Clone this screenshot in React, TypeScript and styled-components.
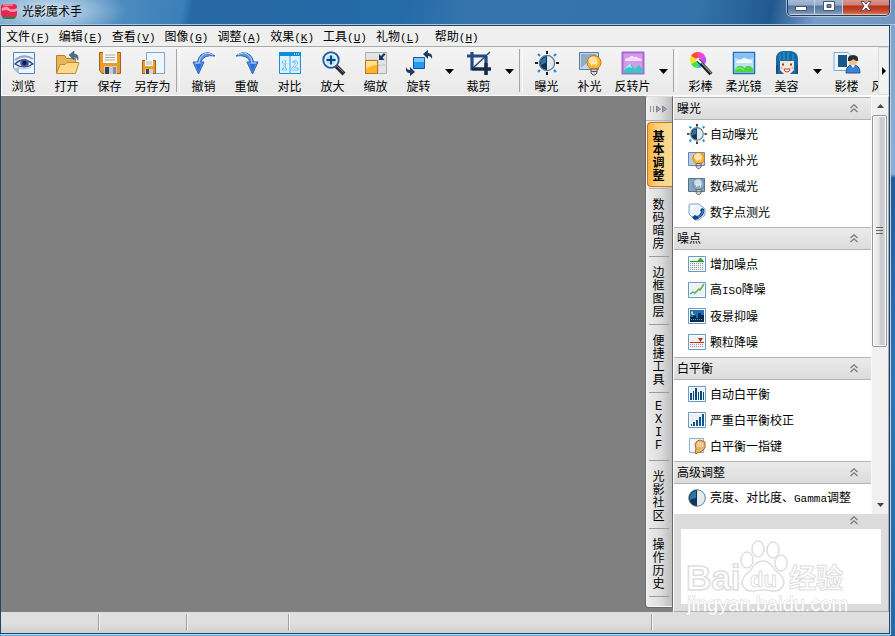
import React from "react";
import styled, { createGlobalStyle, css } from "styled-components";

const GlobalStyle = createGlobalStyle`
  * { box-sizing: border-box; }
  body {
    margin: 0;
    font: 12px/14px "Noto Sans CJK SC", sans-serif;
    color: #000;
    overflow: hidden;
  }
  button { font: inherit; color: inherit; border: 0; padding: 0; background: none; }
  svg { display: block; flex: none; }
`;

const Frame = styled.div`
  height: 100vh;
  display: flex;
  flex-direction: column;
  padding: 0 4px 1px 0;
  background:
    linear-gradient(to bottom, #7ba0cb 0, #8bb0d8 174px, #215b9b 178px, #2f74b8 60%, #2569a9 100%) right / 5px 100% no-repeat,
    #5cb2dc;
`;

const TitleBar = styled.header`
  height: 25px;
  flex: none;
  display: flex;
  align-items: flex-start;
  justify-content: space-between;
  margin-right: -4px;
  padding-right: 5px;
  border-bottom: 1px solid #a9c6de;
  background:
    radial-gradient(ellipse 76px 26px at 50px 11px, rgba(235, 244, 250, 0.85), rgba(235, 244, 250, 0)),
    linear-gradient(100deg, #6c9fc9 0, #528fc1 12%, #3a7fb8 20.5%, #2769a3 21.5%, #246ba8 45%, #3574ad 52%, #3572aa 78%, #20598f 86%, #7a9cc8 91%, #7295bf 100%);
`;

const AppTitle = styled.h1`
  margin: 0;
  padding: 2px 0 0 1px;
  display: flex;
  align-items: center;
  gap: 4px;
  font-size: 12px;
  font-weight: 400;
  line-height: 18px;
`;

const WindowButtons = styled.div`
  display: flex;
  height: 16px;
  width: 103px;
  border: 1px solid #233a55;
  border-top: 0;
  border-radius: 0 0 5px 5px;
  box-shadow: 0 0 0 1px rgba(220, 235, 248, 0.6);
  overflow: hidden;
`;

const WindowButton = styled.button<{ $close?: boolean }>`
  flex: ${(p) => (p.$close ? "47" : "27")} 1 0;
  display: flex;
  justify-content: center;
  border-right: 1px solid #c2d3e5;
  box-shadow: inset 0 -1px 0 rgba(255, 255, 255, 0.5);
  background: ${(p) =>
    p.$close
      ? "linear-gradient(#d9968c 0, #ce8073 5px, #b5301b 6px, #c84a2c 11px, #d98266 100%)"
      : "linear-gradient(#a5bbd5 0, #94adc9 5px, #55779f 6px, #6787ab 11px, #8ba9ca 100%)"};
  &:last-child { border-right: 0; }
`;

const Client = styled.div`
  flex: 1;
  min-height: 0;
  display: flex;
  flex-direction: column;
  border: 1px solid #23455f;
  box-shadow: 1px 1px 0 #b5d8ee;
  margin-bottom: 1px;
  margin-right: 1px;
  background: #f0f0f0;
`;

const MenuBar = styled.nav`
  height: 21px;
  flex: none;
  display: flex;
  align-items: center;
  gap: 9px;
  padding: 2px 0 0 5px;
  border-bottom: 1px solid #acacac;
  background: #efefef;
`;

const MenuItem = styled.button<{ $apart?: boolean }>`
  flex: none;
  line-height: 18px;
  margin-left: ${(p) => (p.$apart ? "6px" : "0")};
`;

const Mono = styled.span`
  font-family: "Liberation Mono", monospace;
  font-size: 11px;
`;

const ToolBar = styled.div`
  height: 49px;
  flex: none;
  display: flex;
  border: 1px solid #fcfcfc;
  border-width: 0 0 1px 1px;
  background: linear-gradient(#f4f4f4, #e9e9e9);
`;

const ToolStrip = styled.div`
  flex: 1;
  min-width: 0;
  display: flex;
  overflow: hidden;
`;

const ToolButton = styled.button`
  width: 43px;
  flex: none;
  display: flex;
  flex-direction: column;
  align-items: center;
  gap: 4px;
  padding-top: 4px;
  white-space: nowrap;
`;

const DropButton = styled.button`
  width: 17px;
  flex: none;
  display: flex;
  justify-content: flex-end;
  align-items: center;
  padding-right: 3px;
`;

const ToolDivider = styled.div`
  width: 8px;
  flex: none;
  display: flex;
  justify-content: center;
  padding: 2px 0 3px;
  &::before {
    content: "";
    width: 2px;
    border-left: 1px solid #a6a6a6;
    border-right: 1px solid #fafafa;
  }
`;

const MoreButton = styled.button`
  width: 11px;
  flex: none;
  display: flex;
  justify-content: center;
  align-items: center;
  border: 1px solid #dadada;
  background: #f2f2f2;
`;

const Main = styled.main`
  flex: 1;
  min-height: 0;
  display: flex;
`;

const Canvas = styled.section`
  flex: 1;
  background: #808080;
`;

const TabColumn = styled.div`
  width: 29px;
  flex: none;
  padding-bottom: 4px;
  display: flex;
  flex-direction: column;
  background: #808080;
  border-right: 1px solid #fff;
`;

const Tabs = styled.div`
  flex: 1;
  min-height: 0;
  border: 1px solid #686868;
  border-top-color: #ddd;
  border-radius: 2px 0 0 4px;
  box-shadow: inset 1px -1px 0 #f6f6f6;
  background: linear-gradient(to right, #eeeeee, #dddddd 55%, #bdbdbd);
  overflow: hidden;
`;

const CollapseButton = styled.button`
  width: 100%;
  height: 24px;
  display: flex;
  align-items: center;
  justify-content: center;
  border-bottom: 1px solid #b5b5b5;
`;

const Tab = styled.button<{ $active?: boolean }>`
  display: flex;
  width: 100%;
  height: 68px;
  padding: 1px 3px 2px 2px;
  justify-content: center;
  position: relative;
  &::after {
    content: "";
    position: absolute;
    left: 3px;
    right: 3px;
    bottom: 0;
    border-bottom: 1px solid #9c9c9c;
  }
  ${(p) =>
    p.$active &&
    css`
      padding: 1px 0 2px 1px;
      font-weight: 700;
      &::after { border-color: #b5b5b5; }
    `}
`;

const TabLabel = styled.span<{ $active?: boolean; $latin?: boolean }>`
  flex: 1;
  display: flex;
  align-items: center;
  justify-content: center;
  line-height: 13px;
  ${(p) => p.$latin && css`font-family: "Liberation Mono", monospace;`}
  ${(p) =>
    p.$active &&
    css`
      padding-right: 3px;
      border: 1px solid #c6781c;
      border-right: 0;
      border-radius: 4px 0 0 4px;
      background: linear-gradient(to right, #fbb040, #fcd27c 40%, #f8dc96);
    `}
  & > span { width: 12px; word-break: break-all; text-align: center; }
`;

const SidePanel = styled.aside`
  width: 215px;
  flex: none;
  display: flex;
  flex-direction: column;
  background: #dcdcdc;
  border-top: 1px solid #fafafa;
  border-bottom: 1px solid #a9a9a9;
  border-right: 1px solid #aaa;
`;

const ListArea = styled.div`
  flex: 1;
  min-height: 0;
  display: flex;
`;

const SectionList = styled.div`
  flex: 1;
  overflow: hidden;
  background: #fff;
`;

const SectionHeader = styled.button`
  width: 100%;
  height: 23px;
  display: flex;
  align-items: center;
  justify-content: space-between;
  padding: 0 13px 1px 3px;
  border: 1px solid #b4b4b4;
  border-width: 1px 0;
  background: linear-gradient(#ebebeb, #dcdcdc);
`;

const Items = styled.ul`
  margin: 0;
  padding: 1px 0 2px 14px;
  list-style: none;
`;

const Item = styled.button`
  height: 26px;
  display: flex;
  align-items: center;
  gap: 4px;
  white-space: nowrap;
`;

const ScrollBar = styled.div`
  width: 17px;
  flex: none;
  display: flex;
  flex-direction: column;
  background: #f0f0f0;
  border-left: 1px solid #fafafa;
`;

const ScrollArrow = styled.button`
  height: 18px;
  flex: none;
  display: flex;
  align-items: center;
  justify-content: center;
`;

const ScrollTrack = styled.div`
  flex: 1;
  min-height: 0;
`;

const ScrollThumb = styled.div`
  height: 61%;
  width: 15px;
  display: flex;
  align-items: center;
  justify-content: center;
  border: 1px solid #979797;
  border-radius: 2px;
  box-shadow: inset 0 0 0 1px #fbfbfb;
  background: linear-gradient(to right, #f4f4f4, #e4e4e8 45%, #c4c6cb 60%, #d8d9dc);
`;

const PreviewArea = styled.div`
  flex: none;
  padding: 0 7px 7px;
  position: relative;
`;

const PreviewToggle = styled.button`
  display: flex;
  width: 100%;
  height: 15px;
  justify-content: flex-end;
  padding: 2px 23px 0 0;
`;

const Preview = styled.div`
  height: 75px;
  background: #fff;
`;

const Watermark = styled.div`
  position: absolute;
  left: 10px;
  top: 22px;
  z-index: 1;
  pointer-events: none;
`;

const StatusBar = styled.footer`
  height: 21px;
  flex: none;
  display: flex;
  padding: 2px 0;
  background: linear-gradient(#dfdfdf 50%, #d0d0d0);
`;

const StatusCell = styled.div<{ $width?: number }>`
  ${(p) =>
    p.$width
      ? css`
          width: ${p.$width}px;
          flex: none;
        `
      : css`
          flex: 1;
        `}
  border-right: 1px solid #a0a0a0;
  box-shadow: 1px 0 0 #f4f4f4;
`;

const StatusEnd = styled.div`
  width: 237px;
  flex: none;
`;

type IconName = string;

const Bulb = ({ color, x = 0, y = 0 }: { color: string; x?: number; y?: number }) => (
  <g transform={`translate(${x} ${y})`}>
    <circle cx="8" cy="7.5" r="7" fill={color} stroke={color === "#ffb52e" ? "#c87813" : "#597895"} />
    <ellipse cx="7" cy="5.5" rx="4.5" ry="4" fill="#fff" opacity=".6" />
    <path d="M6 11l-1-4 3 2 3-2-1 4" fill="none" stroke="#fff3c4" />
    <path d="M5 14h6v4l-2 2H7l-2-2z" fill="#d8d8d8" stroke="#555" />
    <path d="M5 16.5h6" stroke="#555" />
  </g>
);

const Sun = () => (
  <>
    <path d="M12 0v3M12 21v3M0 12h3M21 12h3" stroke="#111b2c" strokeWidth="2" />
    <path d="M3 3l2 2M19 19l2 2M21 3l-2 2M5 19l-2 2" stroke="#1793e8" strokeWidth="2.4" />
    <circle cx="12" cy="12" r="7.6" fill="#e4e9ed" stroke="#64798a" strokeWidth="1.3" />
    <path d="M12 5a7 7 0 0 0 0 14z" fill="#0b3357" />
    <path d="M11 6a6 6 0 0 0-4.700 8Q9 12 11 12z" fill="#2a77a8" />
  </>
);

const Undo = () => (
  <>
    <path d="M23 5Q16-1 9 4Q6 7 5.500 11H1l5.500 12L12 11H8.800Q10 7 14 5.500Q18 4 23 5z" fill="#5b95e8" stroke="#2b61b4" strokeLinejoin="round" />
    <path d="M21 4Q15 0 10 4.500Q7 7.500 7 12H3" fill="none" stroke="#b3d4fb" />
    <path d="M3.500 13h6l-3 8z" fill="#2d6fd4" />
  </>
);

const toolbarIcons: Record<IconName, React.ReactNode> = {
  browse: (
    <>
      <path d="M1.500 1.500h21v21H7l-5.500-5.500z" fill="#eef5fc" stroke="#4a86c4" />
      <path d="M1.500 17H7v5.500z" fill="#9fc4e6" />
      <path d="M3 9Q12 2 21 8" fill="none" stroke="#97a4bd" strokeWidth="2" />
      <path d="M3 13Q11 5 21 13Q12 19 3 13z" fill="#dfe8f6" stroke="#35466e" strokeWidth="1.200" />
      <circle cx="12.500" cy="12" r="4.300" fill="#3e5cab" />
      <circle cx="12.500" cy="12" r="2.200" fill="#101c48" />
      <path d="M5 16Q12 20 19 16" fill="none" stroke="#b9c5dd" />
    </>
  ),
  open: (
    <>
      <path d="M1.500 22V4.500h8l2 3h9V14" fill="#e6b45b" stroke="#b67b2b" />
      <path d="M1.500 22.500L5 13.500h5l2-2h12l-3.500 11z" fill="#ffd98b" stroke="#c28a37" />
      <path d="M14 4l5-4v3q5 0 4 6q-1-3-4-3v3z" fill="#4d6d8d" stroke="#34506c" strokeWidth=".5" />
    </>
  ),
  save: (
    <>
      <path d="M1.500 1.500h21v21H4l-2.500-3z" fill="#e99c27" stroke="#9d621e" />
      <path d="M5 1h14v11H5z" fill="#f8f8f4" />
      <path d="M7 4h10M7 6.500h10M7 9h10" stroke="#aaa" />
      <path d="M6 15h13v8H6z" fill="#c9cbd0" />
      <path d="M7 16h4v7H7z" fill="#384150" />
      <path d="M15 16h3v7h-3z" fill="#8b909b" />
    </>
  ),
  saveAs: (
    <>
      <path d="M5.500 1.500h18v21h-18z" fill="#edf5fd" stroke="#7ea6cf" />
      <path d="M1.500 9.500h13v13h-13z" fill="#e99c27" stroke="#9d621e" />
      <path d="M4 9h8v6H4z" fill="#fff" />
      <path d="M5 11h6M5 13h6" stroke="#aaa" />
      <path d="M4 18h8v5H4z" fill="#d0d2d6" />
      <path d="M5 18h3v5H5z" fill="#3e4650" />
    </>
  ),
  undo: <Undo />,
  redo: <g transform="translate(24 0) scale(-1 1)"><Undo /></g>,
  compare: (
    <>
      <path d="M1.500 1.500h21v21h-21z" fill="#d9f0fd" stroke="#198fdb" />
      <path d="M1 1h22v4H1z" fill="#138bdb" />
      <path d="M16 3h1M18 3h1M20 3h1" stroke="#fff" />
      <path d="M12 5v18" stroke="#3ea6e5" />
      <path d="M4.500 10.500l2-1h1v8h1v1.500h-4v-1.500h1.500v-5.500h-1.500zM14.500 11q3-3 5 0q1 2-3.500 6h4v2h-6v-2q4-4 3.500-6q-1-1-2 .5z" fill="#fff" stroke="#55afe5" strokeWidth=".8" />
    </>
  ),
  zoomIn: (
    <>
      <path d="M15 15l8 8" stroke="#2a2a2a" strokeWidth="4" />
      <path d="M16 15l6.500 6.500" stroke="#929292" />
      <circle cx="10" cy="9" r="7.700" fill="#ace0ff" stroke="#315f9e" strokeWidth="2" />
      <circle cx="10" cy="9" r="5.800" fill="none" stroke="#e4f7ff" strokeWidth="1.500" />
      <path d="M10 4.500v9M5.500 9h9" stroke="#17407c" strokeWidth="2" />
    </>
  ),
  scale: (
    <>
      <path d="M1.500 1.500h21v21h-21z" fill="#e2e3e5" stroke="#aaaeb3" />
      <path d="M1 9h13M14 9v14M14 14h9" stroke="#c5c6c8" />
      <path d="M1.500 9.500h12v13h-12z" fill="#ffb52a" stroke="#be741b" />
      <path d="M2 10h11v4Q7 14 2 18z" fill="#ffe38e" />
      <path d="M15 9V3l2 2 3-3 1.500 1.500-3 3L20.500 9z" fill="#17365c" />
    </>
  ),
  rotate: (
    <>
      <path d="M6.500 6.500h11v11h-11z" fill="#229cf0" stroke="#1555a5" />
      <path d="M7 7h10v4H7z" fill="#75c6ff" />
      <path d="M16 3l5-4v3q5 0 4 6q-1-3-4-3v3zM8 21l-5 4v-3q-5 0-4-6q1 3 4 3v-3z" fill="#1b3b62" />
    </>
  ),
  crop: (
    <>
      <path d="M0 5h19M5 1v17h19M19 5v19" fill="none" stroke="#204c83" strokeWidth="3.200" />
      <path d="M6 17L23 1" stroke="#24456f" strokeWidth="1.300" />
      <path d="M5 18h19M19 12v12" stroke="#162b46" strokeWidth="3.200" />
    </>
  ),
  exposure: <Sun />,
  fill: (
    <>
      <path d="M1.500 1.500h19v17h-19z" fill="#c6d8e8" stroke="#527da6" />
      <path d="M3 3h16L3 17z" fill="#8eacc9" />
      <Bulb color="#ffb52e" x={8} y={4} />
    </>
  ),
  reversal: (
    <>
      <path d="M1.500 1.500h21v21h-21z" fill="#d69aed" stroke="#a56bd1" strokeWidth="2" />
      <path d="M4 9q1-3 4-2q2-4 5-1q3-1 4 1q4 0 4 3H4z" fill="#f2ddfa" />
      <path d="M2 21l7-9 5 6 4-4 4 5v3H2z" fill="#35c8c4" />
      <path d="M9 12l2 5-3-1-4 2z" fill="#a8f0e9" />
    </>
  ),
  wand: (
    <>
      <path d="M9 9V1a8 8 0 0 1 7 4z" fill="#ff40cf" />
      <path d="M9 9l7-4a8 8 0 0 1 0 8z" fill="#b850ff" />
      <path d="M9 9l7 4a8 8 0 0 1-7 4z" fill="#39b5ff" />
      <path d="M9 9v8a8 8 0 0 1-7-4z" fill="#43e54e" />
      <path d="M9 9l-7 4a8 8 0 0 1 0-8z" fill="#f5e528" />
      <path d="M9 9L2 5a8 8 0 0 1 7-4z" fill="#ff4b3d" />
      <circle cx="9" cy="9" r="2" fill="#fff" />
      <path d="M9 9l13 14" stroke="#1d1d20" strokeWidth="4" />
      <path d="M10 9l12 13" stroke="#8f9096" strokeWidth="1.200" />
      <path d="M8 8l4 4" stroke="#eee" strokeWidth="2" />
    </>
  ),
  soft: (
    <>
      <path d="M1.500 1.500h21v21h-21z" fill="#bfe2fb" stroke="#1673c8" strokeWidth="1.500" />
      <path d="M3 3h18v4Q12 10 3 7z" fill="#86bff2" />
      <path d="M4 12q1-4 5-3q3-4 6-1q5 0 5 4z" fill="#f3faff" />
      <path d="M2.500 18q6-6 10-1q4-5 9 1v3.500h-19z" fill="#4ed343" />
      <path d="M3 19q5-4 9 0" fill="none" stroke="#a5ee86" />
    </>
  ),
  beauty: (
    <>
      <path d="M1 23V8q0-8 8-8h7q7 1 7 8v15z" fill="#146ba9" />
      <path d="M5 10h14v9l-4 4H9l-4-4z" fill="#ffe6d5" />
      <path d="M5 3v7M9 1v8M13 1v8M18 3v7" stroke="#3f96cd" />
      <path d="M8 12.500v2M16 12.500v2" stroke="#2a1d1d" strokeWidth="1.500" />
      <path d="M9 18h6q-.5 3-3 3t-3-3" fill="#fff" stroke="#a3443c" />
      <circle cx="6.500" cy="17" r="1.300" fill="#f6b0b5" /><circle cx="17.500" cy="17" r="1.300" fill="#f6b0b5" />
      <path d="M2 14v9M22 14v9" stroke="#1d4e75" strokeWidth="2" />
    </>
  ),
  studio: (
    <>
      <path d="M-1 1.500h14l2 2v16H-1z" fill="#eef6fc" stroke="#7da9d1" />
      <path d="M3 4h9v12H3z" fill="#1d568b" />
      <path d="M11 22q0-8 7-8t7 8z" fill="#3f82d4" stroke="#1e57a1" />
      <circle cx="18" cy="10" r="4.500" fill="#f7c08a" />
      <path d="M13 10q-1-6 5-6t5 6q-3 0-5-2q-1 2-5 2z" fill="#222b36" />
      <path d="M16 14l2 3 2-3" fill="#fff" />
    </>
  ),
  web: <path d="M2 2h20v20H2z" fill="#d4e4f2" stroke="#6d94bb" />,
};

const Tile = ({ children }: { children: React.ReactNode }) => (
  <>
    <path d="M.5 1.500h17v15H.5z" fill="#fff" stroke="#6599c8" />
    <path d="M2 3h14v12H2z" fill="#eef1f3" />
    {children}
  </>
);

const listIcons: Record<IconName, React.ReactNode> = {
  sun: <g transform="translate(-1 -1) scale(.83)"><Sun /></g>,
  bulbOn: (
    <>
      <path d="M.5 1.500h16v13H.5z" fill="#b9cde0" stroke="#6689b0" />
      <g transform="translate(4 1) scale(.83)"><Bulb color="#ffb52e" /></g>
    </>
  ),
  bulbOff: (
    <>
      <path d="M.5 1.500h16v13H.5z" fill="#8aa5c0" stroke="#4e749c" />
      <g transform="translate(4 1) scale(.83)"><Bulb color="#86a9c9" /></g>
    </>
  ),
  meter: (
    <>
      <path d="M2 1h9l6 5v6l-6 5H7L1 11V2z" fill="#eaf3fc" stroke="#7fa3cc" strokeLinejoin="round" />
      <path d="M3 2h7q-6 2-7 7z" fill="#fff" />
      <path d="M16 6q1 4-2 7t-7 4q-2-1-3-3l3-2 2 1q3-1 4-4l-1-2 2-2z" fill="#12488f" />
      <path d="M15 7q0 5-5 7" fill="none" stroke="#5d97d8" />
    </>
  ),
  noiseAdd: (
    <Tile>
      <path d="M2 8.500h14M2 10.500h14M2 12.500h14M2 14.500h14" stroke="#999" strokeDasharray="1 1" />
      <path d="M2 6.500h14" fill="none" stroke="#17a126" />
      <path d="M9.500 6l3-3.500 3 3.500z" fill="#3ba52a" />
    </Tile>
  ),
  iso: (
    <Tile>
      <path d="M2 13l3-2 2 1 4-4 1 1 4-6" fill="none" stroke="#56b647" strokeWidth="1.500" />
    </Tile>
  ),
  night: (
    <Tile>
      <path d="M2 3h14v12H2z" fill="#1c6fb8" />
      <path d="M2 10h3V8h3v3h2V6h3v2h3v7H2z" fill="#092a4c" />
      <path d="M5 4q-1 4 3 4-5 1-5-3z" fill="#ffe16b" />
      <path d="M3 12.500h12" stroke="#53a1cc" strokeDasharray="1 1" />
    </Tile>
  ),
  grain: (
    <Tile>
      <path d="M2 11.500h14M2 13.500h14" stroke="#999" strokeDasharray="1 1" />
      <path d="M2 9.500h14" stroke="#d42714" />
      <path d="M10 5h5l-2.500 4z" fill="#c52815" />
    </Tile>
  ),
  bars: (
    <Tile>
      <path d="M2 8h2v7H2zM5 6h1v9H5zM7 3h2v12H7zM10 7h1v8h-1zM12 6h2v9h-2zM15 7h1v8h-1z" fill="#0b4a7d" />
    </Tile>
  ),
  ramp: (
    <Tile>
      <path d="M3 13h1v2H3zM5 11h2v4H5zM8 9h2v6H8zM11 6h2v9h-2zM14 3h2v12h-2z" fill="#0f558f" />
    </Tile>
  ),
  finger: (
    <>
      <path d="M1.500 1.500h14v14h-14z" fill="#f2f6fb" stroke="#8db0d4" />
      <path d="M7 16l1-4-1-5q2-4 5-4l5 2v6l-4 4-4 1-1 1z" fill="#e9b365" stroke="#a4692a" />
      <path d="M9.500 10l1-5M12 10l.5-5M14.500 10V6" stroke="#fff0c6" />
    </>
  ),
  contrast: (
    <>
      <circle cx="9" cy="9" r="8.300" fill="#e7eaed" stroke="#627b8e" />
      <path d="M9 1a8 8 0 0 0 0 16z" fill="#0c355a" />
      <path d="M8 2a7 7 0 0 0-6 9Q5 9 8 9z" fill="#2d78a9" />
    </>
  ),
};

const ToolIcon = ({ name }: { name: IconName }) => (
  <svg width="24" height="24" viewBox="0 0 24 24" overflow="visible" aria-hidden="true">{toolbarIcons[name]}</svg>
);

const ListIcon = ({ name }: { name: IconName }) => (
  <svg width="18" height="18" viewBox="0 0 18 18" overflow="visible" aria-hidden="true">{listIcons[name]}</svg>
);

const Chevrons = () => (
  <svg width="8" height="9" viewBox="0 0 8 9" aria-hidden="true">
    <path d="M.5 4L4 .8 7.500 4M.5 8L4 4.800 7.500 8" fill="none" stroke="#717b86" strokeWidth="1.300" />
  </svg>
);

const DownTriangle = () => (
  <svg width="9" height="5" viewBox="0 0 9 5" aria-hidden="true"><path d="M0 0h9L4.500 5z" /></svg>
);

const menus = [
  ["文件", "F"], ["编辑", "E"], ["查看", "V"], ["图像", "G"], ["调整", "A"],
  ["效果", "K"], ["工具", "U"], ["礼物", "L"], ["帮助", "H"],
];

type Tool = { icon?: IconName; label?: string; drop?: boolean };
const divider: Tool = {};
const tools: Tool[] = [
  { icon: "browse", label: "浏览" },
  { icon: "open", label: "打开" },
  { icon: "save", label: "保存" },
  { icon: "saveAs", label: "另存为" },
  divider,
  { icon: "undo", label: "撤销" },
  { icon: "redo", label: "重做" },
  { icon: "compare", label: "对比" },
  { icon: "zoomIn", label: "放大" },
  { icon: "scale", label: "缩放" },
  { icon: "rotate", label: "旋转", drop: true },
  { icon: "crop", label: "裁剪", drop: true },
  divider,
  { icon: "exposure", label: "曝光" },
  { icon: "fill", label: "补光" },
  { icon: "reversal", label: "反转片", drop: true },
  divider,
  { icon: "wand", label: "彩棒" },
  { icon: "soft", label: "柔光镜" },
  { icon: "beauty", label: "美容", drop: true },
  { icon: "studio", label: "影楼" },
  { icon: "web", label: "风格化" },
];

const tabs = ["基本调整", "数码暗房", "边框图层", "便捷工具", "EXIF", "光影社区", "操作历史"];

const sections: { title: string; items: [IconName, React.ReactNode][] }[] = [
  { title: "曝光", items: [["sun", "自动曝光"], ["bulbOn", "数码补光"], ["bulbOff", "数码减光"], ["meter", "数字点测光"]] },
  { title: "噪点", items: [["noiseAdd", "增加噪点"], ["iso", <>高<Mono>ISO</Mono>降噪</>], ["night", "夜景抑噪"], ["grain", "颗粒降噪"]] },
  { title: "白平衡", items: [["bars", "自动白平衡"], ["ramp", "严重白平衡校正"], ["finger", "白平衡一指键"]] },
  { title: "高级调整", items: [["contrast", <>亮度、对比度、<Mono>Gamma</Mono>调整</>]] },
];

const BaiduMark = () => (
  <svg width="166" height="82" viewBox="0 0 166 82" aria-hidden="true" overflow="visible">
    <g fill="#fff" stroke="#dedede" strokeWidth="1.500" fontFamily='"Liberation Sans", "Noto Sans CJK SC", sans-serif' fontWeight="700">
      <text x="2" y="54" fontSize="35">Bai</text>
      <ellipse cx="63" cy="24" rx="6" ry="8" />
      <ellipse cx="74" cy="13" rx="6" ry="8" />
      <ellipse cx="89" cy="14" rx="6" ry="8" />
      <ellipse cx="97" cy="27" rx="6" ry="8" />
      <path d="M79 25q7 0 12 9q9 7 9 13q-2 9-12 8q-9-2-18 0q-10 1-12-8q0-6 9-13q5-9 12-9z" />
      <text x="66" y="51" fontSize="22" strokeWidth="1">du</text>
      <text x="105" y="52" fontSize="27" strokeWidth="1">经验</text>
    </g>
    <text x="3" y="75" fontSize="20" fill="#fff" stroke="#d2d2d2" strokeWidth="1" paintOrder="stroke" fontFamily='"Liberation Sans", sans-serif'>jingyan.baidu.com</text>
  </svg>
);

export default function App() {
  return (
    <Frame>
      <GlobalStyle />
      <TitleBar>
        <AppTitle>
          <svg width="17" height="17" viewBox="0 0 17 17" aria-hidden="true">
            <rect x="1" y="3" width="14" height="13" rx="3" fill="#298535" />
            <rect x="0" y="1" width="16" height="13" rx="3" fill="#e52752" />
            <path d="M1 5q5-3 7 0t8 0v3q-5 2-8 0t-7 0z" fill="#ff98ad" />
            <path d="M2 2h10" stroke="#ffbecb" />
          </svg>
          光影魔术手
        </AppTitle>
        <WindowButtons>
          <WindowButton aria-label="最小化">
            <svg width="12" height="12" viewBox="0 0 12 12"><path d="M.5 6.500h11v4H.5z" fill="#fff" stroke="#4a5668" /></svg>
          </WindowButton>
          <WindowButton aria-label="最大化">
            <svg width="12" height="12" viewBox="0 0 12 12"><path d="M.5 1.500h11v9H.5zM4 4.500v3h4v-3z" fill="#fff" fillRule="evenodd" stroke="#4a5668" /></svg>
          </WindowButton>
          <WindowButton $close aria-label="关闭">
            <svg width="12" height="12" viewBox="0 0 12 12"><path d="M1 1.500h3L6 4l2-2.500h3L8 6l3 4.500H8L6 8l-2 2.500H1L4 6z" fill="#fff" stroke="#574a50" /></svg>
          </WindowButton>
        </WindowButtons>
      </TitleBar>

      <Client>
        <MenuBar>
          {menus.map(([name, key]) => (
            <MenuItem key={key} $apart={key === "H"}>
              {name}<Mono>(<u>{key}</u>)</Mono>
            </MenuItem>
          ))}
        </MenuBar>

        <ToolBar>
          <ToolStrip>
            {tools.map((tool, i) =>
              tool.icon ? (
                <React.Fragment key={i}>
                  <ToolButton>
                    <ToolIcon name={tool.icon} />
                    {tool.label}
                  </ToolButton>
                  {tool.drop && <DropButton aria-label={`${tool.label}选项`}><DownTriangle /></DropButton>}
                </React.Fragment>
              ) : (
                <ToolDivider key={i} />
              )
            )}
          </ToolStrip>
          <MoreButton aria-label="更多">
            <svg width="4" height="8" viewBox="0 0 4 8"><path d="M0 0l4 4-4 4z" /></svg>
          </MoreButton>
        </ToolBar>

        <Main>
          <Canvas />
          <TabColumn>
            <Tabs>
              <CollapseButton aria-label="收起面板">
                <svg width="18" height="8" viewBox="0 0 18 8">
                  <path d="M.5 1v6M3.500 1v6" stroke="#8f949b" />
                  <path d="M6.500 1l4 3-4 3zM12.500 1l4 3-4 3z" fill="#9da2a9" stroke="#7d838b" />
                </svg>
              </CollapseButton>
              {tabs.map((label, i) => (
                <Tab key={label} $active={i === 0}>
                  <TabLabel $active={i === 0} $latin={label === "EXIF"}><span>{label}</span></TabLabel>
                </Tab>
              ))}
            </Tabs>
          </TabColumn>

          <SidePanel>
            <ListArea>
              <SectionList>
                {sections.map((section) => (
                  <section key={section.title}>
                    <SectionHeader>{section.title}<Chevrons /></SectionHeader>
                    <Items>
                      {section.items.map(([icon, label]) => (
                        <li key={icon}><Item><ListIcon name={icon} /><span>{label}</span></Item></li>
                      ))}
                    </Items>
                  </section>
                ))}
              </SectionList>
              <ScrollBar>
                <ScrollArrow aria-label="向上滚动">
                  <svg width="7" height="4" viewBox="0 0 7 4"><path d="M0 4h7L3.500 0z" fill="#444" /></svg>
                </ScrollArrow>
                <ScrollTrack>
                  <ScrollThumb>
                    <svg width="7" height="8" viewBox="0 0 7 8"><path d="M0 .5h7M0 3.500h7M0 6.500h7" stroke="#666" /></svg>
                  </ScrollThumb>
                </ScrollTrack>
                <ScrollArrow aria-label="向下滚动">
                  <svg width="7" height="4" viewBox="0 0 7 4"><path d="M0 0h7L3.500 4z" fill="#444" /></svg>
                </ScrollArrow>
              </ScrollBar>
            </ListArea>
            <PreviewArea>
              <PreviewToggle aria-label="收起预览"><Chevrons /></PreviewToggle>
              <Preview />
              <Watermark><BaiduMark /></Watermark>
            </PreviewArea>
          </SidePanel>
        </Main>

        <StatusBar>
          <StatusCell $width={98} />
          <StatusCell $width={88} />
          <StatusCell $width={102} />
          <StatusCell />
          <StatusEnd />
        </StatusBar>
      </Client>
    </Frame>
  );
}
